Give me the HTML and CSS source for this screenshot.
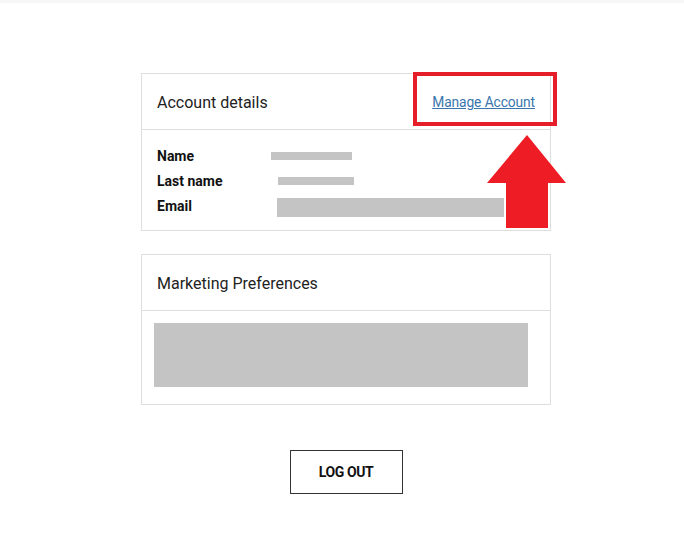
FILE: index.html
```html
<!DOCTYPE html>
<html lang="en">
<head>
    <meta charset="UTF-8">
    <meta name="viewport" content="width=device-width, initial-scale=1.0">
    <title>My account</title>
    <link rel="stylesheet" href="styles.css">
</head>
<body>
    <div class="top-strip"></div>
    <main>
        <section class="card">
            <div class="card-header">
                <h2>Account details</h2>
                <a href="#" class="manage-link">Manage Account</a>
            </div>
            <div class="card-body details">
                <div class="row">
                    <span class="label">Name</span>
                    <span class="redact redact-name"></span>
                </div>
                <div class="row">
                    <span class="label">Last name</span>
                    <span class="redact redact-last"></span>
                </div>
                <div class="row">
                    <span class="label">Email</span>
                    <span class="redact redact-email"></span>
                </div>
            </div>
            <!-- highlight drawn over the card -->
            <div class="highlight-box"></div>
            <svg class="highlight-arrow" width="80" height="94" viewBox="0 0 80 94">
                <polygon points="40,0 79,48 61,48 61,93 19,93 19,48 0,48" fill="#ee1c25"/>
            </svg>
        </section>

        <section class="card">
            <div class="card-header">
                <h2>Marketing Preferences</h2>
            </div>
            <div class="card-body prefs">
                <div class="redact redact-block"></div>
            </div>
        </section>

        <div class="logout-wrap">
            <button class="logout-button">LOG OUT</button>
        </div>
    </main>
</body>
</html>
```

FILE: styles.css
```css
body {
    margin: 0;
    padding: 0;
    background-color: #fff;
    font-family: Roboto, "Liberation Sans", sans-serif;
    color: #1f1f1f;
}

.top-strip {
    height: 3px;
    background-color: #f7f7f7;
}

main {
    padding: 70px 0 0 8px;
}

.card {
    position: relative;
    width: 410px;
    box-sizing: border-box;
    margin: 0 auto 23px;
    border: 1px solid #dedede;
    background-color: #fff;
}

.card-header {
    display: flex;
    align-items: center;
    justify-content: space-between;
    box-sizing: border-box;
    height: 56px;
    padding: 1px 15px 0;
    border-bottom: 1px solid #dedede;
}

.card-header h2 {
    margin: 0;
    font-size: 16px;
    font-weight: 400;
    color: #222;
}

.manage-link {
    font-size: 13.8px;
    letter-spacing: -0.1px;
    color: #3a76ad;
    text-decoration: underline;
}

.details {
    padding: 13px 15px 12px;
}

.row {
    display: grid;
    grid-template-columns: 114px 1fr;
    align-items: center;
    height: 25px;
}

.label {
    font-size: 14px;
    font-weight: 700;
    color: #111;
}

.redact {
    display: block;
    background-color: #c4c4c4;
}

.redact-name {
    width: 81px;
    height: 8px;
}

.redact-last {
    width: 76px;
    height: 8px;
    margin-left: 7px;
}

.redact-email {
    width: 227px;
    height: 19px;
    margin-left: 6px;
    margin-top: 3px;
}

.prefs {
    padding: 12px 22px 17px 12px;
}

.redact-block {
    height: 64px;
}

.highlight-box {
    position: absolute;
    left: 271px;
    top: -2px;
    width: 144px;
    height: 54px;
    box-sizing: border-box;
    border: 4px solid #e61e2a;
}

.highlight-arrow {
    position: absolute;
    left: 345px;
    top: 61px;
}

.logout-wrap {
    display: flex;
    justify-content: center;
    padding-top: 22px;
}

.logout-button {
    width: 113px;
    height: 44px;
    background-color: #fff;
    border: 1px solid #333;
    font-family: Roboto, "Liberation Sans", sans-serif;
    font-size: 14px;
    font-weight: 700;
    letter-spacing: -0.4px;
    color: #111;
    cursor: pointer;
}
```
